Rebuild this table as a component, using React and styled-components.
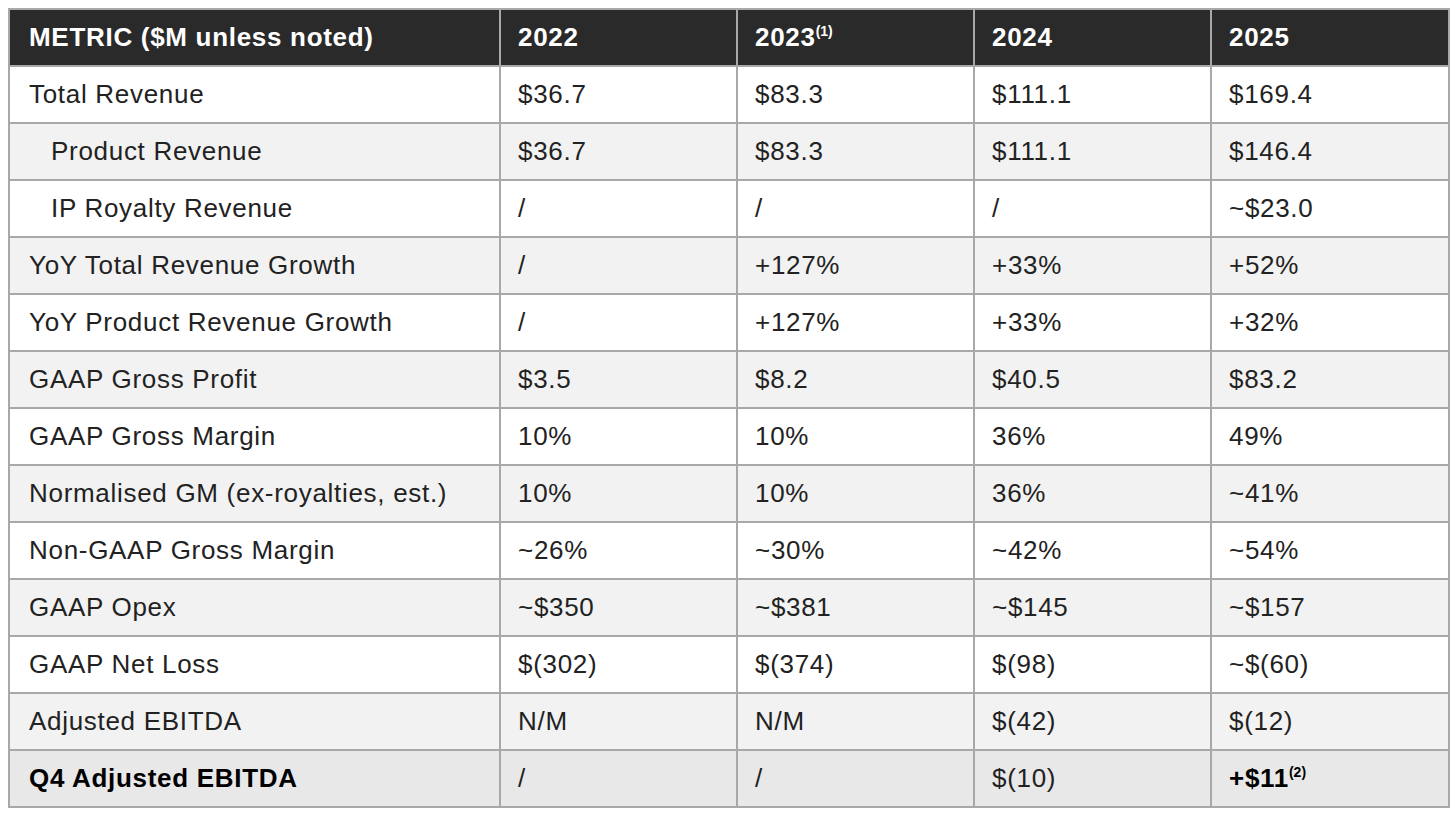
import styled, { createGlobalStyle } from "styled-components";

const GlobalStyle = createGlobalStyle`
  html, body {
    margin: 0;
    padding: 0;
    background: #fff;
  }
  body {
    padding: 8px;
    font-family: "Liberation Sans", Arial, sans-serif;
  }
`;

const Table = styled.table`
  width: 1440px;
  table-layout: fixed;
  border-collapse: collapse;
  border: 2px solid #a8a8a8;
  font-size: 26px;
  letter-spacing: 0.7px;
  color: #222;
`;

const Col = styled.col`
  width: ${(p) => p.$w}px;
`;

const HeadRow = styled.tr`
  height: 57px;
  background: #2a2a2a;
`;

const Th = styled.th`
  border: 2px solid #a8a8a8;
  color: #fff;
  font-weight: 700;
  text-align: left;
  padding: 0 0 0 17px;
  white-space: nowrap;
  &:first-child {
    padding-left: 19px;
  }
`;

const Row = styled.tr`
  height: 57px;
  background: ${(p) => (p.$last ? "#e8e8e8" : p.$alt ? "#f2f2f2" : "#fff")};
  font-weight: ${(p) => (p.$bold ? 700 : 400)};
  color: ${(p) => (p.$bold ? "#000" : "#222")};
`;

const Td = styled.td`
  border: 2px solid #a8a8a8;
  padding: 0 0 0 17px;
  white-space: nowrap;
  ${(p) => p.$normal && "font-weight: 400; color: #222;"}
`;

const LabelCell = styled(Td)`
  padding-left: ${(p) => (p.$indent ? "41px" : "19px")};
`;

const Sup = styled.sup`
  font-size: 14px;
  letter-spacing: 0;
  font-weight: 700;
  vertical-align: 0;
  position: relative;
  top: -10px;
`;

const widths = [491, 237, 237, 237, 238];
const years = ["2022", "2023", "2024", "2025"];

const rows = [
  { label: "Total Revenue", values: ["$36.7", "$83.3", "$111.1", "$169.4"] },
  { label: "Product Revenue", indent: true, values: ["$36.7", "$83.3", "$111.1", "$146.4"] },
  { label: "IP Royalty Revenue", indent: true, values: ["/", "/", "/", "~$23.0"] },
  { label: "YoY Total Revenue Growth", values: ["/", "+127%", "+33%", "+52%"] },
  { label: "YoY Product Revenue Growth", values: ["/", "+127%", "+33%", "+32%"] },
  { label: "GAAP Gross Profit", values: ["$3.5", "$8.2", "$40.5", "$83.2"] },
  { label: "GAAP Gross Margin", values: ["10%", "10%", "36%", "49%"] },
  { label: "Normalised GM (ex-royalties, est.)", values: ["10%", "10%", "36%", "~41%"] },
  { label: "Non-GAAP Gross Margin", values: ["~26%", "~30%", "~42%", "~54%"] },
  { label: "GAAP Opex", values: ["~$350", "~$381", "~$145", "~$157"] },
  { label: "GAAP Net Loss", values: ["$(302)", "$(374)", "$(98)", "~$(60)"] },
  { label: "Adjusted EBITDA", values: ["N/M", "N/M", "$(42)", "$(12)"] },
];

export default function App() {
  return (
    <>
      <GlobalStyle />
      <Table>
        <colgroup>
          {widths.map((w, i) => (
            <Col key={i} $w={w} />
          ))}
        </colgroup>
        <thead>
          <HeadRow>
            <Th>METRIC ($M unless noted)</Th>
            {years.map((y) => (
              <Th key={y}>
                {y}
                {y === "2023" && <Sup>(1)</Sup>}
              </Th>
            ))}
          </HeadRow>
        </thead>
        <tbody>
          {rows.map((r, i) => (
            <Row key={r.label} $alt={i % 2 === 1}>
              <LabelCell $indent={r.indent}>{r.label}</LabelCell>
              {r.values.map((v, j) => (
                <Td key={j}>{v}</Td>
              ))}
            </Row>
          ))}
          <Row $last $bold>
            <LabelCell>Q4 Adjusted EBITDA</LabelCell>
            <Td $normal>/</Td>
            <Td $normal>/</Td>
            <Td $normal>$(10)</Td>
            <Td>
              +$11<Sup>(2)</Sup>
            </Td>
          </Row>
        </tbody>
      </Table>
    </>
  );
}
